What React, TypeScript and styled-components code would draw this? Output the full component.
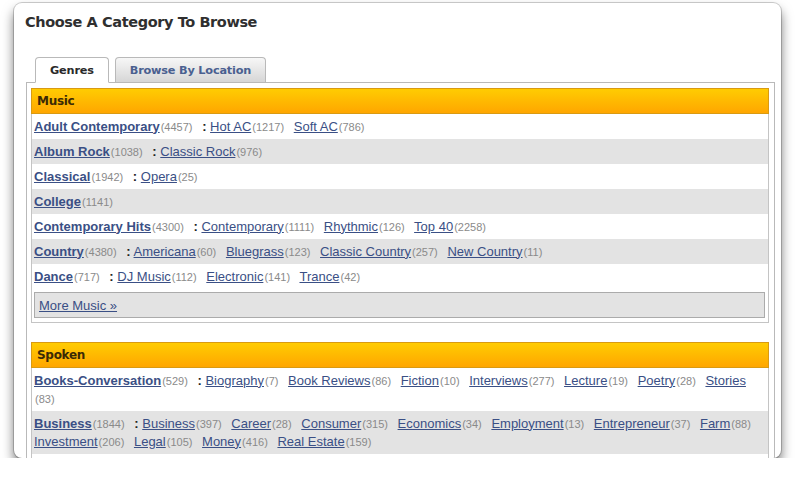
import React from 'react';
import styled, { createGlobalStyle } from 'styled-components';

type Sub = { name: string; count: number };
type Genre = { name: string; count: number; subs: Sub[] };
type Section = { title: string; genres: Genre[]; more?: string };

const sections: Section[] = [
  {
    title: 'Music',
    more: 'More Music »',
    genres: [
      { name: 'Adult Contemporary', count: 4457, subs: [{ name: 'Hot AC', count: 1217 }, { name: 'Soft AC', count: 786 }] },
      { name: 'Album Rock', count: 1038, subs: [{ name: 'Classic Rock', count: 976 }] },
      { name: 'Classical', count: 1942, subs: [{ name: 'Opera', count: 25 }] },
      { name: 'College', count: 1141, subs: [] },
      {
        name: 'Contemporary Hits',
        count: 4300,
        subs: [{ name: 'Contemporary', count: 1111 }, { name: 'Rhythmic', count: 126 }, { name: 'Top 40', count: 2258 }],
      },
      {
        name: 'Country',
        count: 4380,
        subs: [
          { name: 'Americana', count: 60 },
          { name: 'Bluegrass', count: 123 },
          { name: 'Classic Country', count: 257 },
          { name: 'New Country', count: 11 },
        ],
      },
      {
        name: 'Dance',
        count: 717,
        subs: [{ name: 'DJ Music', count: 112 }, { name: 'Electronic', count: 141 }, { name: 'Trance', count: 42 }],
      },
    ],
  },
  {
    title: 'Spoken',
    genres: [
      {
        name: 'Books-Conversation',
        count: 529,
        subs: [
          { name: 'Biography', count: 7 },
          { name: 'Book Reviews', count: 86 },
          { name: 'Fiction', count: 10 },
          { name: 'Interviews', count: 277 },
          { name: 'Lecture', count: 19 },
          { name: 'Poetry', count: 28 },
          { name: 'Stories', count: 83 },
        ],
      },
      {
        name: 'Business',
        count: 1844,
        subs: [
          { name: 'Business', count: 397 },
          { name: 'Career', count: 28 },
          { name: 'Consumer', count: 315 },
          { name: 'Economics', count: 34 },
          { name: 'Employment', count: 13 },
          { name: 'Entrepreneur', count: 37 },
          { name: 'Farm', count: 88 },
          { name: 'Investment', count: 206 },
          { name: 'Legal', count: 105 },
          { name: 'Money', count: 416 },
          { name: 'Real Estate', count: 159 },
        ],
      },
    ],
  },
];

export default function App() {
  return (
    <>
      <GlobalStyle />
      <Window>
        <Title>Choose A Category To Browse</Title>
        <Tabs>
          <Tab active>Genres</Tab>
          <Tab>Browse By Location</Tab>
        </Tabs>
        <Panel>
          {sections.map((s) => (
            <SectionBox key={s.title}>
              <SectionHeader>{s.title}</SectionHeader>
              {s.genres.map((g, i) => (
                <Row key={g.name} shaded={i % 2 === 1}>
                  <MainLink href="#">{g.name}</MainLink>
                  <Count>({g.count})</Count>
                  {g.subs.length > 0 && <> <Sep>:</Sep> </>}
                  {g.subs.map((sub) => (
                    <React.Fragment key={sub.name}>
                      <SubItem>
                        <SubLink href="#">{sub.name}</SubLink>
                        <Count>({sub.count})</Count>
                      </SubItem>{' '}
                    </React.Fragment>
                  ))}
                </Row>
              ))}
              {s.more && (
                <MoreBox>
                  <SubLink href="#">{s.more}</SubLink>
                </MoreBox>
              )}
            </SectionBox>
          ))}
        </Panel>
      </Window>
    </>
  );
}

const GlobalStyle = createGlobalStyle`
  html, body {
    margin: 0;
    padding: 0;
    background: #ffffff;
    overflow: hidden;
  }
  body {
    font-family: "Liberation Sans", Arial, sans-serif;
  }
`;

const Window = styled.div`
  margin: 3px 0 0 14px;
  width: 767px;
  height: 455px;
  background: #fff;
  border-radius: 8px;
  overflow: hidden;
  box-shadow: 0 0 0 1px rgba(0, 0, 0, 0.18), 0 7px 12px rgba(0, 0, 0, 0.55);
  display: flex;
  flex-direction: column;
`;

const Title = styled.h1`
  margin: 0;
  padding: 10px 0 0 11px;
  font-family: "DejaVu Sans", Verdana, sans-serif;
  font-size: 14.5px;
  line-height: 18px;
  font-weight: bold;
  color: #2f2f2f;
  letter-spacing: -0.4px;
`;

const Tabs = styled.div`
  display: flex;
  gap: 6px;
  margin: 26px 0 0 21px;
  position: relative;
  z-index: 1;
`;

const Tab = styled.div<{ active?: boolean }>`
  box-sizing: border-box;
  padding: 0 14px;
  display: flex;
  align-items: center;
  border: 1px solid #b9b9b9;
  border-bottom: ${(p) => (p.active ? '1px solid #fff' : 'none')};
  border-radius: 4px 4px 0 0;
  background: ${(p) => (p.active ? '#fff' : 'linear-gradient(#f7f7f7, #d6d6d6)')};
  font-family: "DejaVu Sans", Verdana, sans-serif;
  font-size: 11.3px;
  font-weight: bold;
  letter-spacing: -0.2px;
  color: ${(p) => (p.active ? '#2a2a2a' : '#4a6090')};
  margin-bottom: ${(p) => (p.active ? '-1px' : '0')};
  height: ${(p) => (p.active ? '26px' : '25px')};
`;

const Panel = styled.div`
  margin-left: 12px;
  width: 749px;
  box-sizing: border-box;
  flex: 1;
  border: 1px solid #b9b9b9;
  border-bottom: none;
  padding: 5px 5px 0 4px;
  display: flex;
  flex-direction: column;
  gap: 19px;
`;

const SectionBox = styled.div`
  border: 1px solid #c4c4c4;
  border-top: none;
  padding-bottom: 4px;
`;

const SectionHeader = styled.div`
  margin: 0 -1px;
  height: 26px;
  box-sizing: border-box;
  padding-left: 5px;
  display: flex;
  align-items: center;
  background: linear-gradient(#ffcc02, #ffa600);
  border: 1px solid #d99a12;
  font-family: "DejaVu Sans", Verdana, sans-serif;
  font-size: 12px;
  font-weight: bold;
  letter-spacing: -0.3px;
  color: #3b2a05;
`;

const Row = styled.div<{ shaded?: boolean }>`
  background: ${(p) => (p.shaded ? '#e3e3e3' : '#fff')};
  padding: 3.5px 11px 3.5px 2px;
  font-size: 13px;
  line-height: 18px;
`;

const linkBase = `
  color: #3a4f85;
  text-decoration: underline;
  text-underline-offset: 1px;
  font-family: "Liberation Sans", Arial, sans-serif;
  font-size: 13px;
`;

const MainLink = styled.a`
  ${linkBase}
  font-weight: bold;
`;

const SubLink = styled.a`
  ${linkBase}
`;

const Count = styled.span`
  display: inline-block;
  color: #8a8a8a;
  font-size: 11px;
  margin-left: 1px;
`;

const Sep = styled.span`
  font-weight: bold;
  color: #222;
  margin-left: 6px;
`;

const SubItem = styled.span`
  margin-right: 6px;
`;

const MoreBox = styled.div`
  margin: 3px 3px 0 2px;
  height: 26px;
  box-sizing: border-box;
  border: 1px solid #ababab;
  background: #e3e3e3;
  padding-left: 4px;
  display: flex;
  align-items: center;
`;
